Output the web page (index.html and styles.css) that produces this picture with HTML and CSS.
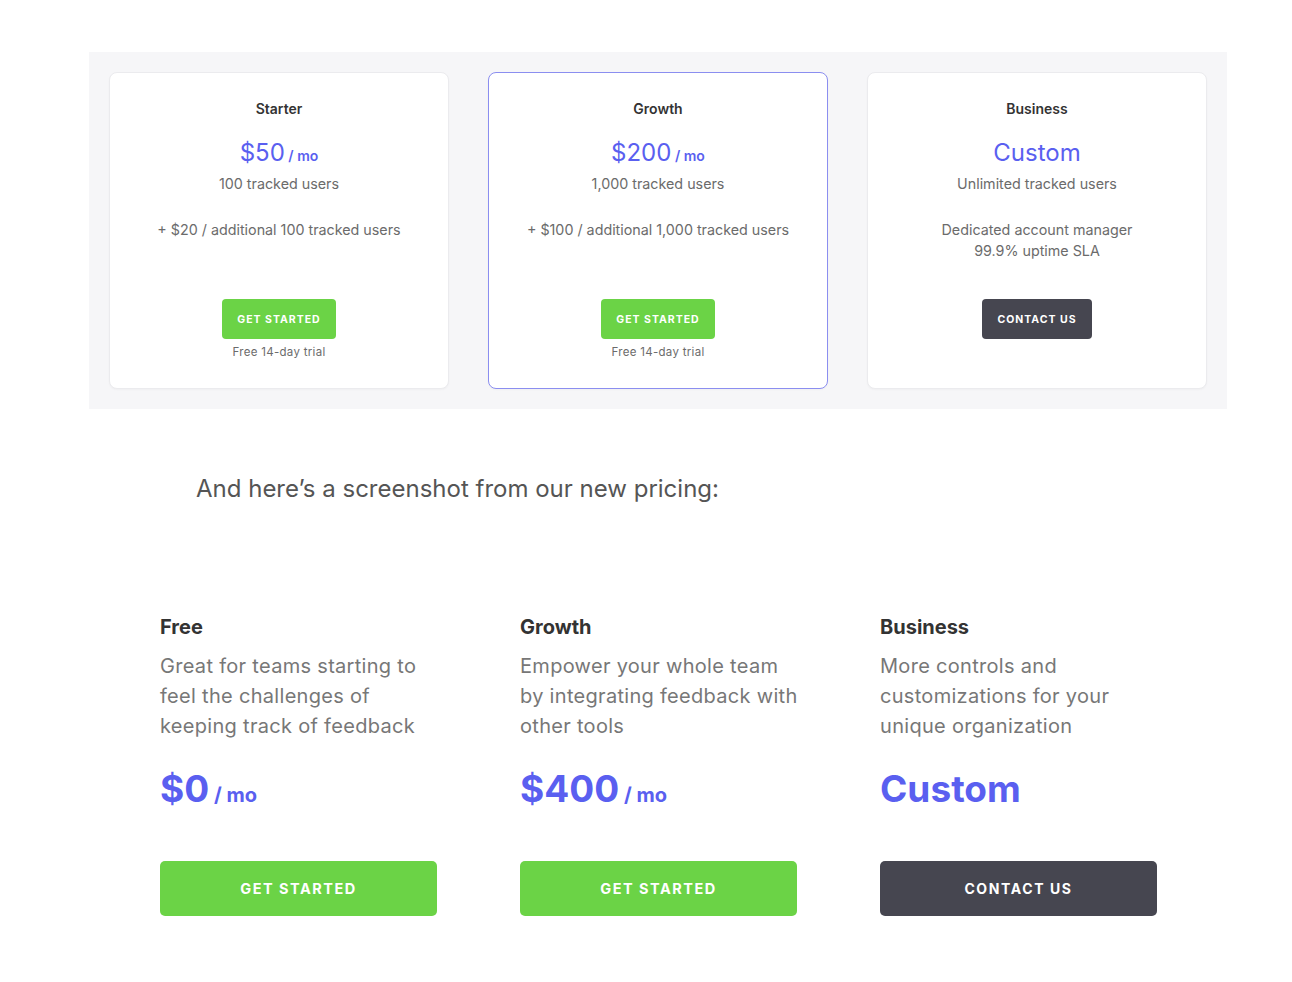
FILE: index.html
```html
<!DOCTYPE html>
<html lang="en">
<head>
<meta charset="utf-8">
<title>Pricing comparison</title>
<link rel="stylesheet" href="styles.css">
</head>
<body>
<section class="old-pricing">
  <div class="card">
    <h3 class="card-title">Starter</h3>
    <div class="card-price">$50<span class="per"> / mo</span></div>
    <p class="card-users">100 tracked users</p>
    <div class="card-extra"><p>+ $20 / additional 100 tracked users</p></div>
    <a class="btn btn-green btn-small">GET STARTED</a>
    <p class="trial">Free 14-day trial</p>
  </div>
  <div class="card card-featured">
    <h3 class="card-title">Growth</h3>
    <div class="card-price">$200<span class="per"> / mo</span></div>
    <p class="card-users">1,000 tracked users</p>
    <div class="card-extra"><p>+ $100 / additional 1,000 tracked users</p></div>
    <a class="btn btn-green btn-small">GET STARTED</a>
    <p class="trial">Free 14-day trial</p>
  </div>
  <div class="card">
    <h3 class="card-title">Business</h3>
    <div class="card-price">Custom</div>
    <p class="card-users">Unlimited tracked users</p>
    <div class="card-extra"><p>Dedicated account manager</p><p>99.9% uptime SLA</p></div>
    <a class="btn btn-dark btn-small">CONTACT US</a>
  </div>
</section>

<p class="intro">And here’s a screenshot from our new pricing:</p>

<section class="new-pricing">
  <div class="plan">
    <h3 class="plan-title">Free</h3>
    <p class="plan-desc">Great for teams starting to<br>feel the challenges of<br>keeping track of feedback</p>
    <div class="plan-price">$0<span class="per"> / mo</span></div>
    <a class="btn btn-green btn-large">GET STARTED</a>
  </div>
  <div class="plan">
    <h3 class="plan-title">Growth</h3>
    <p class="plan-desc">Empower your whole team<br>by integrating feedback with<br>other tools</p>
    <div class="plan-price">$400<span class="per"> / mo</span></div>
    <a class="btn btn-green btn-large">GET STARTED</a>
  </div>
  <div class="plan">
    <h3 class="plan-title">Business</h3>
    <p class="plan-desc">More controls and<br>customizations for your<br>unique organization</p>
    <div class="plan-price">Custom</div>
    <a class="btn btn-dark btn-large">CONTACT US</a>
  </div>
</section>
</body>
</html>
```

FILE: styles.css
```css
* { box-sizing: border-box; }
html, body { margin: 0; padding: 0; background: #ffffff; }
body {
  font-family: Inter, "Noto Sans", "Liberation Sans", sans-serif;
  color: #333;
  width: 1292px;
  min-height: 982px;
}
p, h3 { margin: 0; }

.old-pricing {
  margin: 52px 0 0 89px;
  width: 1138px;
  padding: 20px;
  background: #f6f6f8;
  display: grid;
  grid-template-columns: repeat(3, 340px);
  gap: 39px;
}
.card {
  height: 317px;
  background: #fff;
  border: 1px solid #ebebee;
  border-radius: 8px;
  box-shadow: 0 1px 2px rgba(0, 0, 0, 0.03);
  padding-top: 26px;
  display: flex;
  flex-direction: column;
  align-items: center;
  text-align: center;
}
.card-featured { border-color: #8b8ef0; }
.card-title {
  font-size: 14px;
  line-height: 20px;
  font-weight: 600;
  color: #333;
}
.card-price {
  margin-top: 19px;
  height: 30px;
  font-size: 24px;
  line-height: 30px;
  color: #5a5ff0;
  font-weight: 400;
}
.card-price .per { font-size: 14px; font-weight: 600; line-height: 0; }
.card-users {
  margin-top: 6px;
  font-size: 14.3px;
  line-height: 20px;
  color: #6b6b6b;
}
.card-extra {
  margin-top: 25px;
  height: 80px;
  font-size: 14.3px;
  line-height: 21px;
  color: #6b6b6b;
}
.btn {
  display: flex;
  align-items: center;
  justify-content: center;
  color: #fff;
  font-weight: 700;
  border-radius: 4px;
  text-decoration: none;
}
.btn-green { background: #6bd346; }
.btn-dark { background: #464650; }
.btn-small {
  height: 40px;
  padding: 0 15px;
  font-size: 10.5px;
  letter-spacing: 1px;
}
.trial {
  margin-top: 5px;
  font-size: 11.5px;
  line-height: 16px;
  letter-spacing: 0.3px;
  color: #6b6b6b;
}

.intro {
  margin: 63px 0 0 196px;
  font-size: 24px;
  line-height: 34px;
  color: #555;
}

.new-pricing {
  margin: 107px 0 0 160px;
  display: grid;
  grid-template-columns: repeat(3, 277px);
  gap: 83px;
}
.plan { display: flex; flex-direction: column; }
.plan-title {
  font-size: 20px;
  line-height: 28px;
  font-weight: 700;
  color: #333;
}
.plan-desc {
  margin-top: 10px;
  font-size: 20px;
  letter-spacing: 0.3px;
  line-height: 30px;
  color: #777;
  height: 90px;
  white-space: nowrap;
}
.plan-price {
  margin-top: 24px;
  height: 48px;
  font-size: 37px;
  line-height: 48px;
  font-weight: 700;
  color: #5a5ff0;
}
.plan-price .per { font-size: 20px; line-height: 0; }
.btn-large {
  margin-top: 48px;
  width: 277px;
  height: 55px;
  font-size: 14.5px;
  letter-spacing: 1.5px;
  border-radius: 5px;
}
.btn-large.btn-dark { font-size: 14px; letter-spacing: 1.6px; }
```
